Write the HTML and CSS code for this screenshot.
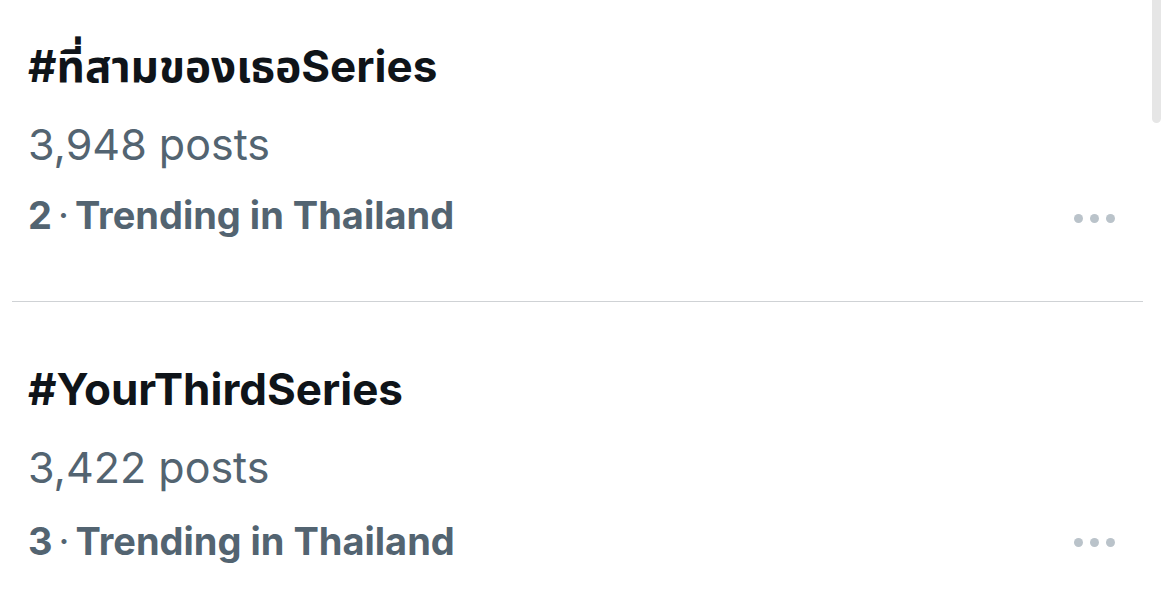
FILE: index.html
```html
<!DOCTYPE html>
<html>
<head>
<meta charset="utf-8">
<link rel="stylesheet" href="styles.css">
</head>
<body>
<div class="page">
  <div class="list">
    <div class="trend">
      <div class="info">
        <div class="title">#ที่สามของเธอSeries</div>
        <div class="posts">3,948 posts</div>
        <div class="meta">2<span class="dot">·</span>Trending in Thailand</div>
      </div>
      <div class="more"><span></span><span></span><span></span></div>
    </div>
    <div class="divider"></div>
    <div class="trend">
      <div class="info">
        <div class="title">#YourThirdSeries</div>
        <div class="posts">3,422 posts</div>
        <div class="meta">3<span class="dot">·</span>Trending in Thailand</div>
      </div>
      <div class="more"><span></span><span></span><span></span></div>
    </div>
  </div>
  <div class="scrollbar"></div>
</div>
</body>
</html>
```
FILE: styles.css
```css
html, body {
  margin: 0;
  padding: 0;
  background: #ffffff;
}
body {
  width: 1170px;
  height: 593px;
  overflow: hidden;
  font-family: "Inter", "Noto Sans Thai", "Noto Sans", "DejaVu Sans", sans-serif;
}
.page {
  position: relative;
  width: 1170px;
  height: 593px;
}
.list {
  display: flex;
  flex-direction: column;
  padding: 0 27px 0 28px;
}
.trend {
  display: flex;
  align-items: center;
  justify-content: space-between;
}
.trend:first-child {
  padding-top: 38px;
  padding-bottom: 58px;
}
.trend:last-child {
  padding-top: 59px;
}
.info {
  display: flex;
  flex-direction: column;
}
.title {
  font-size: 44px;
  font-weight: 700;
  line-height: 56px;
  color: #0f1419;
}
.posts {
  font-size: 43px;
  font-weight: 400;
  line-height: 56px;
  color: #536471;
  margin-top: 22px;
}
.meta {
  font-size: 38px;
  font-weight: 700;
  line-height: 56px;
  color: #536471;
  margin-top: 15px;
}
.trend:last-child .meta {
  margin-top: 18px;
}
.dot {
  font-weight: 400;
  margin: 0 6px;
}
.more {
  display: flex;
  gap: 7px;
  align-self: flex-end;
  margin-bottom: 20px;
  margin-right: 28px;
}
.trend:last-child .more {
  margin-bottom: 22px;
}
.more span {
  width: 9px;
  height: 9px;
  border-radius: 50%;
  background: #bac3ca;
}
.divider {
  height: 1px;
  background: #cfd2d5;
  margin: 0 0 0 -16px;
}
.scrollbar {
  position: absolute;
  top: 0;
  left: 1152px;
  width: 9px;
  height: 123px;
  background: #e6e6e6;
  border-radius: 0 0 5px 5px;
}
```
